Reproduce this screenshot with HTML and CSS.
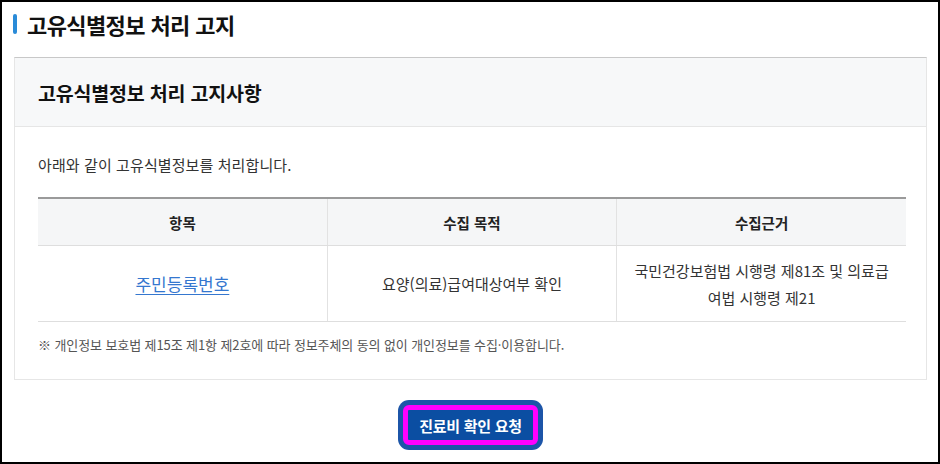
FILE: index.html
```html
<!DOCTYPE html>
<html lang="ko">
<head>
    <meta charset="UTF-8">
    <meta name="viewport" content="width=device-width, initial-scale=1.0">
    <title>고유식별정보 처리 고지</title>
    <link rel="stylesheet" href="styles.css">
</head>
<body>
    <div class="frame">
        <h2 class="section-title"><span class="bar"></span>고유식별정보 처리 고지</h2>

        <div class="notice-card">
            <div class="notice-head">고유식별정보 처리 고지사항</div>
            <div class="notice-body">
                <p class="intro">아래와 같이 고유식별정보를 처리합니다.</p>
                <table class="info-table">
                    <thead>
                        <tr>
                            <th>항목</th>
                            <th>수집 목적</th>
                            <th>수집근거</th>
                        </tr>
                    </thead>
                    <tbody>
                        <tr>
                            <td><a href="#" class="item-link">주민등록번호</a></td>
                            <td>요양(의료)급여대상여부 확인</td>
                            <td>국민건강보험법 시행령 제81조 및 의료급<br>여법 시행령 제21</td>
                        </tr>
                    </tbody>
                </table>
                <p class="note">※ 개인정보 보호법 제15조 제1항 제2호에 따라 정보주체의 동의 없이 개인정보를 수집·이용합니다.</p>
            </div>
        </div>

        <div class="actions">
            <button type="button" class="btn-request">진료비 확인 요청</button>
        </div>
    </div>
</body>
</html>
```

FILE: styles.css
```css
html, body {
    margin: 0;
    padding: 0;
    background: #fff;
}
body {
    font-family: "Noto Sans CJK KR", "Noto Sans", sans-serif;
    color: #222;
}
.frame {
    height: 464px;
    box-sizing: border-box;
    border: 2px solid #000;
    padding: 7px 11px 0 12px;
}
.section-title {
    display: flex;
    align-items: center;
    gap: 10px;
    height: 30px;
    margin: 0 0 18px;
    font-size: 22px;
    font-weight: 700;
    letter-spacing: -0.6px;
    color: #111;
}
.section-title .bar {
    display: block;
    width: 4px;
    height: 20px;
    margin-left: -1px;
    border-radius: 2px;
    background-color: #2a8bd8;
}
.notice-card {
    border: 1px solid #e6e6e6;
    border-top-color: #c8c8c8;
}
.notice-head {
    height: 68px;
    display: flex;
    align-items: center;
    padding-left: 23px;
    background-color: #f7f8f9;
    border-bottom: 1px solid #e6e6e6;
    font-size: 19.5px;
    font-weight: 700;
    letter-spacing: -0.2px;
    color: #111;
}
.notice-body {
    padding: 28px 20px 25px 23px;
}
.intro {
    margin: 0 0 22px;
    font-size: 15px;
    line-height: 20px;
    letter-spacing: 0.1px;
    color: #333;
}
.info-table {
    width: 100%;
    border-collapse: collapse;
    table-layout: fixed;
    border-top: 2px solid #9a9a9a;
}
.info-table th,
.info-table td {
    text-align: center;
    border-bottom: 1px solid #dedede;
    border-left: 1px solid #e2e2e2;
    color: #222;
}
.info-table th:first-child,
.info-table td:first-child {
    border-left: none;
}
.info-table th {
    height: 46px;
    padding: 0;
    background-color: #f5f6f7;
    font-size: 14.5px;
    font-weight: 700;
}
.info-table td {
    height: 75px;
    padding: 0 10px;
    font-size: 15px;
    line-height: 27px;
    color: #333;
}
.item-link {
    color: #3577cf;
    font-size: 17px;
    text-decoration: underline;
    text-underline-offset: 3px;
}
.note {
    margin: 14px 0 0;
    font-size: 13px;
    line-height: 18px;
    letter-spacing: -0.1px;
    color: #555;
}
.actions {
    text-align: center;
    padding-top: 25px;
}
.btn-request {
    height: 40px;
    padding: 0 11px;
    background-color: #0b4ea2;
    color: #fff;
    border: 5px solid #ff00ff;
    border-radius: 6px;
    box-shadow: 0 0 0 5px #1c55a8;
    font-family: inherit;
    font-size: 15px;
    font-weight: 700;
    letter-spacing: -0.3px;
    cursor: pointer;
}
```
